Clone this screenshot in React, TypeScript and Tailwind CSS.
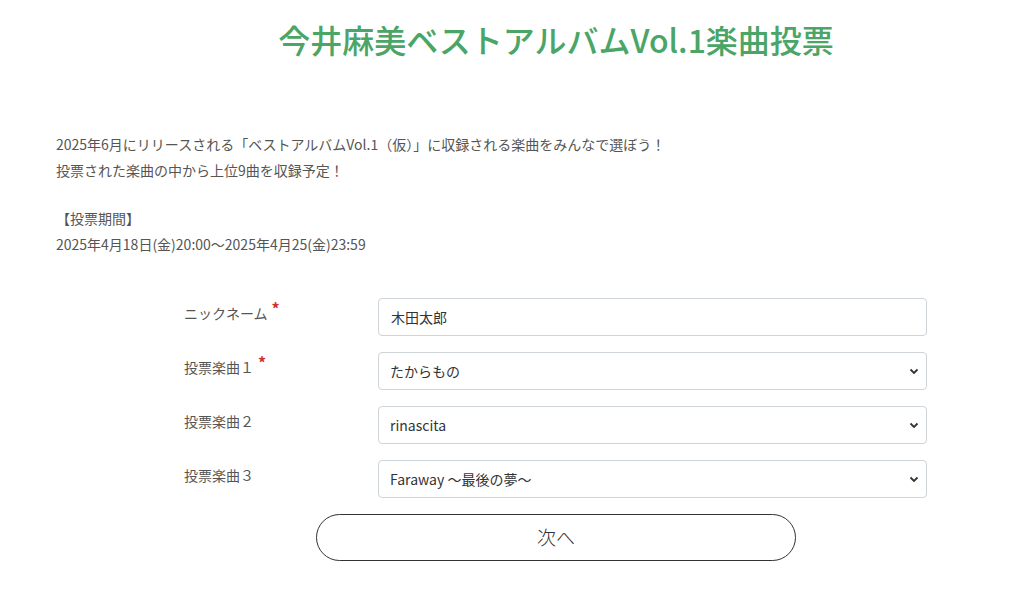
import React from "react";

const FONT = { fontFamily: '"Noto Sans CJK JP", "Noto Sans", sans-serif' };

const Chevron = () => (
  <svg
    className="pointer-events-none absolute right-[8px] top-1/2 -translate-y-1/2"
    width="10"
    height="10"
    viewBox="0 0 10 10"
  >
    <path d="M1.5 3.5 L5 7 L8.5 3.5" fill="none" stroke="#333" strokeWidth="1.8" />
  </svg>
);

const Label = ({ text, required }: { text: string; required?: boolean }) => (
  <div className="w-[194px] pt-[5px] text-[14px] text-[#555]">
    {text}
    {required && (
      <span className="relative -top-[4px] ml-[4px] text-[16px] font-bold leading-none text-[#d03030]">*</span>
    )}
  </div>
);

const SelectRow = ({ label, value, required }: { label: string; value: string; required?: boolean }) => (
  <div className="flex">
    <Label text={label} required={required} />
    <div className="relative w-[549px]">
      <select
        defaultValue={value}
        className="h-[38px] w-full appearance-none rounded-[4px] border border-[#cfd4d8] bg-white pl-[11px] text-[14px] text-[#333] outline-none"
        style={FONT}
      >
        <option>{value}</option>
      </select>
      <Chevron />
    </div>
  </div>
);

export default function App() {
  return (
    <div className="min-h-[591px] w-full overflow-hidden bg-white" style={FONT}>
      <div className="ml-[56px] w-[1000px]">
        {/* タイトル */}
        <h1 className="pt-[15px] text-center text-[32px] font-medium leading-[48px] text-[#4aa566]">
          今井麻美ベストアルバムVol.1楽曲投票
        </h1>

        {/* 説明 */}
        <div className="mt-[69px] text-[14px] leading-[25.5px] text-[#555]">
          <p>2025年6月にリリースされる「ベストアルバムVol.1（仮）」に収録される楽曲をみんなで選ぼう！</p>
          <p>投票された楽曲の中から上位9曲を収録予定！</p>
          <p className="h-[23px]">&nbsp;</p>
          <p>【投票期間】</p>
          <p>2025年4月18日(金)20:00～2025年4月25(金)23:59</p>
        </div>

        {/* フォーム */}
        <form className="mt-[41px] ml-[128px] flex flex-col gap-[16px]">
          <div className="flex">
            <Label text="ニックネーム" required />
            <input
              defaultValue="木田太郎"
              className="h-[38px] w-[549px] rounded-[4px] border border-[#cfd4d8] bg-white px-[12px] text-[14px] text-[#333] outline-none"
              style={FONT}
            />
          </div>
          <SelectRow label="投票楽曲１" value="たからもの" required />
          <SelectRow label="投票楽曲２" value="rinascita" />
          <SelectRow label="投票楽曲３" value="Faraway ～最後の夢～" />
        </form>

        <div className="mt-[16px] flex justify-center">
          <button
            type="button"
            className="h-[47px] w-[480px] rounded-full border border-[#333] bg-white text-[19px] font-light text-[#333]"
            style={FONT}
          >
            次へ
          </button>
        </div>
      </div>
    </div>
  );
}
